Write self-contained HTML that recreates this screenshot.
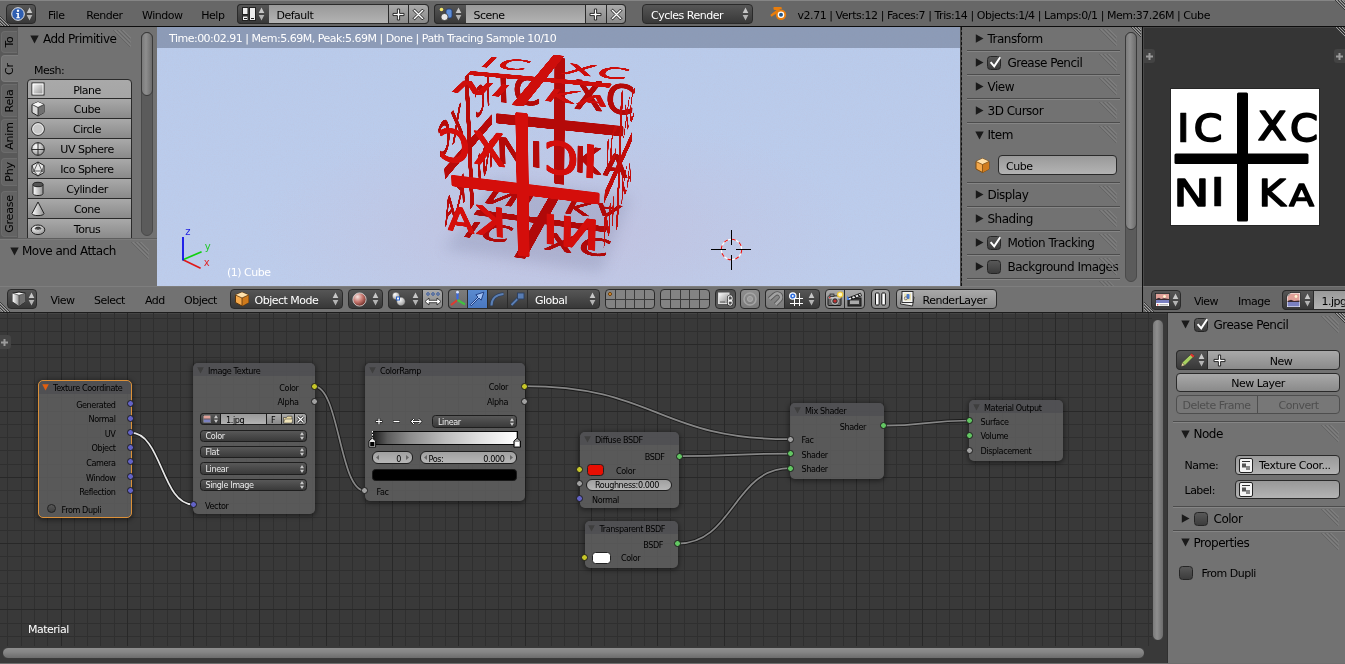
<!DOCTYPE html><html><head><meta charset="utf-8"><title>Blender</title><style>
*{box-sizing:border-box;margin:0;padding:0}
html,body{width:1345px;height:664px;overflow:hidden;background:#727272}
body{position:relative;font-family:"DejaVu Sans","Liberation Sans",sans-serif;font-size:10px;color:#000;line-height:1}
#root{position:absolute;left:0;top:0;width:1345px;height:664px;will-change:transform}
.a{position:absolute}
.t{position:absolute;white-space:nowrap;font-size:11px;letter-spacing:-.5px;line-height:13px}
.pt{position:absolute;white-space:nowrap;font-size:12px;letter-spacing:-.5px;line-height:14px}
.w{position:absolute;border:1px solid #2a2a2a;border-radius:4px}
.tool{background:linear-gradient(#a9a9a9,#8a8a8a)}
.menu{background:linear-gradient(#565656,#383838);color:#fff}
.txt{background:linear-gradient(#999,#b3b3b3)}
.num{background:linear-gradient(#a0a0a0,#b4b4b4)}
.hd{background:#727272}
.nt{position:absolute;white-space:nowrap;font-size:8.1px;letter-spacing:-.4px;line-height:10px;color:#000}
.node{position:absolute;border-radius:5px;background:rgba(94,94,94,.86);box-shadow:0 1px 5px 1px rgba(0,0,0,.45)}
.nh{position:absolute;left:0;top:0;right:0;height:13px;border-radius:5px 5px 0 0;background:rgba(70,70,78,.45)}
.sk{position:absolute;width:7px;height:7px;border-radius:50%;border:1px solid #1c1c1c}
.nm{position:absolute;border:1px solid #1e1e1e;border-radius:3.5px;background:linear-gradient(#585858,#3a3a3a);color:#ececec;font-size:8.1px;letter-spacing:-.4px;line-height:10px;white-space:nowrap}
</style></head><body><div id="root">
<div class="a" style="left:0px;top:0px;width:1345px;height:26px;background:#676767"></div>
<div class="a" style="left:0px;top:0px;width:1345px;height:1px;background:#858585"></div>
<div class="a" style="left:0px;top:26px;width:1345px;height:1px;background:#0c0c0c"></div>
<svg class="a" style="left:0px;top:14px;transform:" width="12" height="12" viewBox="0 0 12 12"><path d="M0 2L10 12M0 5L7 12M0 8L4 12" stroke="#3a3a3a" stroke-width="1" fill="none"/><path d="M0 3L9 12M0 6L6 12M0 9L3 12" stroke="#a0a0a0" stroke-width="1" fill="none"/></svg>
<svg class="a" style="left:1333px;top:0px;transform:scale(-1,-1)" width="12" height="12" viewBox="0 0 12 12"><path d="M0 2L10 12M0 5L7 12M0 8L4 12" stroke="#3a3a3a" stroke-width="1" fill="none"/><path d="M0 3L9 12M0 6L6 12M0 9L3 12" stroke="#a0a0a0" stroke-width="1" fill="none"/></svg>
<div class="w menu" style="left:6px;top:4px;width:30px;height:20px;"></div>
<svg class="a" style="left:11px;top:7px" width="14" height="14" viewBox="0 0 14 14"><circle cx="7" cy="7" r="6.3" fill="#2f5fb2" stroke="#e8e8e8" stroke-width="1"/><circle cx="7" cy="3.8" r="1.2" fill="#fff"/><path d="M5.3 6h2.6v4.2h1v1H5.3v-1h1V7h-1z" fill="#fff"/></svg>
<svg class="a" style="left:26px;top:7px" width="7" height="14" viewBox="0 0 7 14"><path d="M3.5 0.6L6.3 5.9H0.7z" fill="#c8c8c8"/><path d="M3.5 13.4L6.3 8.1H0.7z" fill="#c8c8c8" opacity=".85"/></svg>
<div class="t" style="left:48px;top:9px;">File</div>
<div class="t" style="left:86.3px;top:9px;">Render</div>
<div class="t" style="left:142px;top:9px;">Window</div>
<div class="t" style="left:201.3px;top:9px;">Help</div>
<div class="w txt" style="left:237px;top:4px;width:191.5px;height:20px;"></div>
<div class="w menu" style="left:237px;top:4px;width:32px;height:20px;border-radius:4px 0 0 4px;border-right:none"></div>
<div class="a" style="left:388px;top:4px;width:20px;height:20px;border:none;border-left:1px solid #2a2a2a;border-top:1px solid #2a2a2a;border-bottom:1px solid #2a2a2a;border-radius:0;background:linear-gradient(#a9a9a9,#8a8a8a)"></div>
<div class="w" style="left:408px;top:4px;width:20.5px;height:20px;border-radius:0 4px 4px 0;background:linear-gradient(#a9a9a9,#8a8a8a)"></div>
<div class="a" style="left:408px;top:5px;width:1px;height:18px;background:#2a2a2a"></div>
<svg class="a" style="left:242px;top:7px" width="14" height="14" viewBox="0 0 14 14"><rect x="0.5" y="0.5" width="5.5" height="7" fill="#eee" stroke="#222"/><rect x="0.5" y="9" width="5.5" height="4.5" fill="#eee" stroke="#222"/><rect x="7.5" y="0.5" width="6" height="13" fill="#eee" stroke="#222"/><path d="M2 11.5h3M9 11.5h3" stroke="#222"/></svg>
<svg class="a" style="left:258px;top:7px" width="7" height="14" viewBox="0 0 7 14"><path d="M3.5 0.6L6.3 5.9H0.7z" fill="#c8c8c8"/><path d="M3.5 13.4L6.3 8.1H0.7z" fill="#c8c8c8" opacity=".85"/></svg>
<div class="t" style="left:276.5px;top:9px;">Default</div>
<svg class="a" style="left:391.5px;top:7.5px" width="13" height="13" viewBox="0 0 13 13"><path d="M5.4 1h2.2v4.4H12v2.2H7.6V12H5.4V7.6H1V5.4h4.4z" fill="#fff" stroke="#1a1a1a" stroke-width=".9"/></svg>
<svg class="a" style="left:411.75px;top:7.5px" width="13" height="13" viewBox="0 0 13 13"><path d="M5.4 0h2.2v5.4H13v2.2H7.6V13H5.4V7.6H0V5.4h5.4z" transform="rotate(45 6.5 6.5)" fill="#fff" stroke="#1a1a1a" stroke-width=".9"/></svg>
<div class="w txt" style="left:434px;top:4px;width:192px;height:20px;"></div>
<div class="w menu" style="left:434px;top:4px;width:32px;height:20px;border-radius:4px 0 0 4px;border-right:none"></div>
<div class="a" style="left:585px;top:4px;width:21px;height:20px;border:none;border-left:1px solid #2a2a2a;border-top:1px solid #2a2a2a;border-bottom:1px solid #2a2a2a;border-radius:0;background:linear-gradient(#a9a9a9,#8a8a8a)"></div>
<div class="w" style="left:606px;top:4px;width:20px;height:20px;border-radius:0 4px 4px 0;background:linear-gradient(#a9a9a9,#8a8a8a)"></div>
<div class="a" style="left:606px;top:5px;width:1px;height:18px;background:#2a2a2a"></div>
<svg class="a" style="left:438px;top:6px" width="16" height="16" viewBox="0 0 16 16"><circle cx="3.5" cy="3.5" r="1.8" fill="#f4e86a"/><rect x="8" y="3" width="6" height="9" rx="2" fill="#5f8fd8" stroke="#1d3a78" stroke-width=".8"/><circle cx="6.5" cy="11" r="3.6" fill="#e8e8e8" stroke="#333" stroke-width=".8"/></svg>
<svg class="a" style="left:455px;top:7px" width="7" height="14" viewBox="0 0 7 14"><path d="M3.5 0.6L6.3 5.9H0.7z" fill="#c8c8c8"/><path d="M3.5 13.4L6.3 8.1H0.7z" fill="#c8c8c8" opacity=".85"/></svg>
<div class="t" style="left:473.5px;top:9px;">Scene</div>
<svg class="a" style="left:589.0px;top:7.5px" width="13" height="13" viewBox="0 0 13 13"><path d="M5.4 1h2.2v4.4H12v2.2H7.6V12H5.4V7.6H1V5.4h4.4z" fill="#fff" stroke="#1a1a1a" stroke-width=".9"/></svg>
<svg class="a" style="left:609.5px;top:7.5px" width="13" height="13" viewBox="0 0 13 13"><path d="M5.4 0h2.2v5.4H13v2.2H7.6V13H5.4V7.6H0V5.4h5.4z" transform="rotate(45 6.5 6.5)" fill="#fff" stroke="#1a1a1a" stroke-width=".9"/></svg>
<div class="w menu" style="left:642px;top:4px;width:111px;height:20px;"></div>
<div class="t" style="left:651px;top:9px;color:#fff">Cycles Render</div>
<svg class="a" style="left:742px;top:7px" width="7" height="14" viewBox="0 0 7 14"><path d="M3.5 0.6L6.3 5.9H0.7z" fill="#c8c8c8"/><path d="M3.5 13.4L6.3 8.1H0.7z" fill="#c8c8c8" opacity=".85"/></svg>
<svg class="a" style="left:770px;top:6px" width="18" height="15" viewBox="0 0 18 15"><path d="M1 9.5L9 3.2H4.5L4.3 2h6.3l1 0.8" fill="none" stroke="#e87d0d" stroke-width="1.8" stroke-linejoin="round"/><path d="M1 10L7 5.6" stroke="#e87d0d" stroke-width="2"/><circle cx="11" cy="8.7" r="5.2" fill="#e87d0d"/><circle cx="11" cy="8.7" r="3.3" fill="#fff"/><circle cx="11" cy="8.7" r="2" fill="#265787"/></svg>
<div class="t" style="left:797.5px;top:9px;letter-spacing:-.455px">v2.71 | Verts:12 | Faces:7 | Tris:14 | Objects:1/4 | Lamps:0/1 | Mem:37.26M | Cube</div>
<div class="a" style="left:0px;top:27px;width:157px;height:259px;background:#727272"></div>
<div class="a" style="left:0px;top:27px;width:17.5px;height:211px;background:#595959"></div>
<div class="a" style="left:1px;top:31px;width:16px;height:22px;background:#636363;border:1px solid #6c6c6c;border-right:none;border-radius:4px 0 0 4px"></div>
<div class="a" style="left:1px;top:31px;width:16px;height:22px"><div class="t" style="left:7.5px;top:11.0px;letter-spacing:-.2px;transform:translate(-50%,-50%) rotate(-90deg)">To</div></div>
<div class="a" style="left:1px;top:55px;width:17px;height:27px;background:#727272;border:1px solid #7c7c7c;border-right:none;border-radius:4px 0 0 4px"></div>
<div class="a" style="left:1px;top:55px;width:16px;height:27px"><div class="t" style="left:7.5px;top:13.5px;letter-spacing:-.2px;transform:translate(-50%,-50%) rotate(-90deg)">Cr</div></div>
<div class="a" style="left:1px;top:84px;width:16px;height:33px;background:#636363;border:1px solid #6c6c6c;border-right:none;border-radius:4px 0 0 4px"></div>
<div class="a" style="left:1px;top:84px;width:16px;height:33px"><div class="t" style="left:7.5px;top:16.5px;letter-spacing:-.2px;transform:translate(-50%,-50%) rotate(-90deg)">Rela</div></div>
<div class="a" style="left:1px;top:119px;width:16px;height:34px;background:#636363;border:1px solid #6c6c6c;border-right:none;border-radius:4px 0 0 4px"></div>
<div class="a" style="left:1px;top:119px;width:16px;height:34px"><div class="t" style="left:7.5px;top:17.0px;letter-spacing:-.2px;transform:translate(-50%,-50%) rotate(-90deg)">Anim</div></div>
<div class="a" style="left:1px;top:158px;width:16px;height:28px;background:#636363;border:1px solid #6c6c6c;border-right:none;border-radius:4px 0 0 4px"></div>
<div class="a" style="left:1px;top:158px;width:16px;height:28px"><div class="t" style="left:7.5px;top:14.0px;letter-spacing:-.2px;transform:translate(-50%,-50%) rotate(-90deg)">Phy</div></div>
<div class="a" style="left:1px;top:191px;width:16px;height:46px;background:#636363;border:1px solid #6c6c6c;border-right:none;border-radius:4px 0 0 4px"></div>
<div class="a" style="left:1px;top:191px;width:16px;height:46px"><div class="t" style="left:7.5px;top:23.0px;letter-spacing:-.2px;transform:translate(-50%,-50%) rotate(-90deg)">Grease</div></div>
<svg class="a" style="left:30px;top:35px" width="9" height="9" viewBox="0 0 9 9"><path d="M0.3 0.5H8.7L4.5 8.5z" fill="#1a1a1a"/></svg>
<div class="pt" style="left:43px;top:32px;">Add Primitive</div>
<svg class="a" style="left:113px;top:30px" width="18" height="18" viewBox="0 0 18 18"><path d="M0.5 0L17.5 17M4.5 0L17.5 13M8.5 0L17.5 9" stroke="#585858" stroke-width="1" fill="none"/><path d="M1.5 0L18.5 17M5.5 0L18.5 13M9.5 0L18.5 9" stroke="#8e8e8e" stroke-width=".9" fill="none"/></svg>
<div class="t" style="left:34px;top:64px;">Mesh:</div>
<div class="w tool" style="left:27px;top:79px;width:105px;height:164px;overflow:hidden;border-radius:4px 4px 3px 3px"></div>
<svg width="0" height="0" style="position:absolute"><defs><linearGradient id="gpl" x1="0" y1="0" x2="1" y2="1"><stop offset="0" stop-color="#fff"/><stop offset="1" stop-color="#888"/></linearGradient><radialGradient id="gsp" cx=".35" cy=".3" r=".8"><stop offset="0" stop-color="#fff"/><stop offset="1" stop-color="#8c8c8c"/></radialGradient><linearGradient id="gcy" x1="0" y1="0" x2="1" y2="0"><stop offset="0" stop-color="#fff"/><stop offset="1" stop-color="#909090"/></linearGradient></defs></svg>
<svg class="a" style="left:30px;top:81px" width="16" height="16" viewBox="0 0 16 16"><rect x="2" y="2" width="12" height="12" fill="url(#gpl)" stroke="#222" stroke-width="1"/><rect x="3" y="3" width="10" height="10" fill="none" stroke="#fff" stroke-width="1"/></svg>
<div class="t" style="left:46px;width:82px;text-align:center;top:84px">Plane</div>
<div class="a" style="left:28px;top:98px;width:103px;height:1px;background:#2a2a2a"></div>
<div class="a" style="left:28px;top:99px;width:103px;height:19px;background:linear-gradient(#a9a9a9,#8a8a8a)"></div>
<svg class="a" style="left:30px;top:101px" width="16" height="16" viewBox="0 0 16 16"><path d="M8 1L14 3.5V11.5L8 15L2 11.5V3.5z" fill="#d8d8d8" stroke="#222" stroke-width="1"/><path d="M8 6.5L14 3.5V11.5L8 15z" fill="#707070"/><path d="M2 3.5L8 1L14 3.5L8 6.5z" fill="#f6f6f6"/><path d="M2 3.5L8 6.5L14 3.5M8 6.5V15" stroke="#222" stroke-width=".8" fill="none"/></svg>
<div class="t" style="left:46px;width:82px;text-align:center;top:103px">Cube</div>
<div class="a" style="left:28px;top:118px;width:103px;height:1px;background:#2a2a2a"></div>
<div class="a" style="left:28px;top:119px;width:103px;height:19px;background:linear-gradient(#a9a9a9,#8a8a8a)"></div>
<svg class="a" style="left:30px;top:121px" width="16" height="16" viewBox="0 0 16 16"><circle cx="8" cy="8" r="6.3" fill="#c8c8c8" stroke="#222" stroke-width="1"/><circle cx="8" cy="8" r="5.3" fill="none" stroke="#f0f0f0" stroke-width=".9"/></svg>
<div class="t" style="left:46px;width:82px;text-align:center;top:123px">Circle</div>
<div class="a" style="left:28px;top:138px;width:103px;height:1px;background:#2a2a2a"></div>
<div class="a" style="left:28px;top:139px;width:103px;height:19px;background:linear-gradient(#a9a9a9,#8a8a8a)"></div>
<svg class="a" style="left:30px;top:141px" width="16" height="16" viewBox="0 0 16 16"><circle cx="8" cy="8" r="6.3" fill="url(#gsp)" stroke="#222" stroke-width="1"/><path d="M1.7 8.5H14.3M8 1.7V14.3" stroke="#222" stroke-width=".9" fill="none"/></svg>
<div class="t" style="left:46px;width:82px;text-align:center;top:143px">UV Sphere</div>
<div class="a" style="left:28px;top:158px;width:103px;height:1px;background:#2a2a2a"></div>
<div class="a" style="left:28px;top:159px;width:103px;height:19px;background:linear-gradient(#a9a9a9,#8a8a8a)"></div>
<svg class="a" style="left:30px;top:161px" width="16" height="16" viewBox="0 0 16 16"><path d="M8 1L14 4.5V11.5L8 15L2 11.5V4.5z" fill="#e8e8e8" stroke="#222" stroke-width="1"/><path d="M8 1L4 10H12zM2 4.5L4 10L8 15L12 10L14 4.5M2 11.5L4 10M12 10L14 11.5" stroke="#222" stroke-width=".7" fill="none"/><path d="M12 10L14 4.5V11.5z" fill="#777"/></svg>
<div class="t" style="left:46px;width:82px;text-align:center;top:163px">Ico Sphere</div>
<div class="a" style="left:28px;top:178px;width:103px;height:1px;background:#2a2a2a"></div>
<div class="a" style="left:28px;top:179px;width:103px;height:19px;background:linear-gradient(#a9a9a9,#8a8a8a)"></div>
<svg class="a" style="left:30px;top:181px" width="16" height="16" viewBox="0 0 16 16"><path d="M3 3.5V12.5C3 15.2 13 15.2 13 12.5V3.5" fill="url(#gcy)" stroke="#222" stroke-width="1"/><ellipse cx="8" cy="3.5" rx="5" ry="2.2" fill="#555" stroke="#222" stroke-width="1"/></svg>
<div class="t" style="left:46px;width:82px;text-align:center;top:183px">Cylinder</div>
<div class="a" style="left:28px;top:198px;width:103px;height:1px;background:#2a2a2a"></div>
<div class="a" style="left:28px;top:199px;width:103px;height:19px;background:linear-gradient(#a9a9a9,#8a8a8a)"></div>
<svg class="a" style="left:30px;top:201px" width="16" height="16" viewBox="0 0 16 16"><path d="M8 1L14 12.5C14 15.3 2 15.3 2 12.5z" fill="url(#gcy)" stroke="#222" stroke-width="1"/></svg>
<div class="t" style="left:46px;width:82px;text-align:center;top:203px">Cone</div>
<div class="a" style="left:28px;top:218px;width:103px;height:1px;background:#2a2a2a"></div>
<div class="a" style="left:28px;top:219px;width:103px;height:19px;background:linear-gradient(#a9a9a9,#8a8a8a)"></div>
<svg class="a" style="left:30px;top:221px" width="16" height="16" viewBox="0 0 16 16"><ellipse cx="8" cy="8.8" rx="6.8" ry="4.8" fill="url(#gsp)" stroke="#222" stroke-width="1"/><ellipse cx="8" cy="7.6" rx="2.8" ry="1.5" fill="#4a4a4a" stroke="#222" stroke-width=".9"/><path d="M5.6 8.6Q8 10.2 10.4 8.6" stroke="#fff" stroke-width=".8" fill="none"/></svg>
<div class="t" style="left:46px;width:82px;text-align:center;top:223px">Torus</div>
<div class="a" style="left:141px;top:32px;width:12px;height:204px;background:#5b5b5b;border-radius:6px;border:1px solid #4a4a4a"></div>
<div class="a" style="left:141px;top:32px;width:12px;height:64px;background:linear-gradient(90deg,#7a7a7a,#8e8e8e 40%,#6c6c6c);border-radius:6px;border:1px solid #3a3a3a"></div>
<div class="a" style="left:0px;top:238px;width:157px;height:48px;background:#727272"></div>
<div class="a" style="left:0px;top:238px;width:157px;height:1px;background:#5e5e5e"></div>
<div class="a" style="left:0px;top:239px;width:157px;height:1px;background:#7b7b7b"></div>
<svg class="a" style="left:10px;top:247px" width="9" height="9" viewBox="0 0 9 9"><path d="M0.3 0.5H8.7L4.5 8.5z" fill="#1a1a1a"/></svg>
<div class="pt" style="left:22px;top:244px;">Move and Attach</div>
<svg class="a" style="left:131px;top:242px" width="18" height="18" viewBox="0 0 18 18"><path d="M0.5 0L17.5 17M4.5 0L17.5 13M8.5 0L17.5 9" stroke="#585858" stroke-width="1" fill="none"/><path d="M1.5 0L18.5 17M5.5 0L18.5 13M9.5 0L18.5 9" stroke="#8e8e8e" stroke-width=".9" fill="none"/></svg>
<div class="a" style="left:157px;top:27px;width:804px;height:259px;background:linear-gradient(#b9cbeb,#bbccec 60%,#bdcdec);overflow:hidden"><div style="position:absolute;left:0;top:0;width:804px;height:259px;background:radial-gradient(ellipse 300px 120px at 400px 205px,rgba(214,150,172,.20),rgba(214,160,180,.08) 60%,transparent)"></div>
<svg style="position:absolute;left:0;top:0" width="804" height="259"><filter id="nz" x="0" y="0" width="100%" height="100%"><feTurbulence type="fractalNoise" baseFrequency="0.85" numOctaves="2" seed="3"/><feColorMatrix type="matrix" values="0 0 0 0 0.55  0 0 0 0 0.5  0 0 0 0 0.62  1.6 0 0 0 -0.62"/></filter><rect width="804" height="259" filter="url(#nz)" opacity=".22"/></svg>
<svg style="position:absolute;left:0;top:0;filter:blur(7px)" width="804" height="259"><polygon points="287.4,222.5 444.4,245.2 473.9,170.0 337.8,153.5" fill="rgba(70,80,120,.16)"/></svg>
<div style="position:absolute;left:0;top:0;width:444px;height:411px;transform-origin:0 0;transform:matrix3d(0.283926,0.0238877,0,-9.41232e-05,0.0686393,0.348128,0,0.000174599,0,0,1,0,333.816,21.4578,0,1)"><svg width="444" height="411" viewBox="0 0 148 137" style="position:absolute;left:0;top:0;overflow:visible"><g fill="#b40a09" stroke="#b40a09" stroke-linejoin="round"><rect x="66" y="3.5" width="11" height="129" rx="1.5" stroke="none"/><rect x="3.5" y="64.5" width="134" height="10.5" rx="1.5" stroke="none"/><g font-family="'DejaVu Sans','Liberation Sans',sans-serif" font-size="100"><text transform="translate(4.50,52.50) scale(0.5300,0.3890)" stroke-width="1.31">I</text><text transform="translate(22.62,52.13) scale(0.4138,0.3737)" stroke-width="4.06">C</text><text transform="translate(86.52,51.40) scale(0.4258,0.3849)" stroke-width="3.95">X</text><text transform="translate(118.77,52.12) scale(0.4052,0.3842)" stroke-width="4.05">C</text><text transform="translate(2.36,117.00) scale(0.4836,0.3781)" stroke-width="3.71">N</text><text transform="translate(37.70,117.20) scale(0.6100,0.3822)" stroke-width="1.21">I</text><text transform="translate(87.58,116.70) scale(0.4123,0.3685)" stroke-width="4.10">K</text><text transform="translate(118.24,116.70) scale(0.3636,0.3068)" stroke-width="4.77">A</text></g></g></svg></div>
<div style="position:absolute;left:0;top:0;width:444px;height:411px;transform-origin:0 0;transform:matrix3d(0.308232,0.0259327,0,-0.000102181,0.256915,-0.106853,0,0.000397835,0,0,1,0,287.426,222.541,0,1)"><svg width="444" height="411" viewBox="0 0 148 137" style="position:absolute;left:0;top:0;overflow:visible"><g fill="#b00909" stroke="#b00909" stroke-linejoin="round"><rect x="66" y="3.5" width="11" height="129" rx="1.5" stroke="none"/><rect x="3.5" y="64.5" width="134" height="10.5" rx="1.5" stroke="none"/><g font-family="'DejaVu Sans','Liberation Sans',sans-serif" font-size="100"><text transform="translate(4.50,52.50) scale(0.5300,0.3890)" stroke-width="1.31">I</text><text transform="translate(22.62,52.13) scale(0.4138,0.3737)" stroke-width="4.06">C</text><text transform="translate(86.52,51.40) scale(0.4258,0.3849)" stroke-width="3.95">X</text><text transform="translate(118.77,52.12) scale(0.4052,0.3842)" stroke-width="4.05">C</text><text transform="translate(2.36,117.00) scale(0.4836,0.3781)" stroke-width="3.71">N</text><text transform="translate(37.70,117.20) scale(0.6100,0.3822)" stroke-width="1.21">I</text><text transform="translate(87.58,116.70) scale(0.4123,0.3685)" stroke-width="4.10">K</text><text transform="translate(118.24,116.70) scale(0.3636,0.3068)" stroke-width="4.77">A</text></g></g></svg></div>
<div style="position:absolute;left:0;top:0;width:444px;height:411px;transform-origin:0 0;transform:matrix3d(-0.219066,0.091112,0,-0.000339225,0.068639,0.348128,0,0.000174598,0,0,1,0,333.816,21.4578,0,1)"><svg width="444" height="411" viewBox="0 0 148 137" style="position:absolute;left:0;top:0;overflow:visible"><g fill="#b80a09" stroke="#b80a09" stroke-linejoin="round"><rect x="66" y="3.5" width="11" height="129" rx="1.5" stroke="none"/><rect x="3.5" y="64.5" width="134" height="10.5" rx="1.5" stroke="none"/><g font-family="'DejaVu Sans','Liberation Sans',sans-serif" font-size="100"><text transform="translate(4.50,52.50) scale(0.5300,0.3890)" stroke-width="1.31">I</text><text transform="translate(22.62,52.13) scale(0.4138,0.3737)" stroke-width="4.06">C</text><text transform="translate(86.52,51.40) scale(0.4258,0.3849)" stroke-width="3.95">X</text><text transform="translate(118.77,52.12) scale(0.4052,0.3842)" stroke-width="4.05">C</text><text transform="translate(2.36,117.00) scale(0.4836,0.3781)" stroke-width="3.71">N</text><text transform="translate(37.70,117.20) scale(0.6100,0.3822)" stroke-width="1.21">I</text><text transform="translate(87.58,116.70) scale(0.4123,0.3685)" stroke-width="4.10">K</text><text transform="translate(118.24,116.70) scale(0.3636,0.3068)" stroke-width="4.77">A</text></g></g></svg></div>
<div style="position:absolute;left:0;top:0;width:444px;height:411px;transform-origin:0 0;transform:matrix3d(0.271258,-0.112819,0,0.000420045,0.0849923,0.431069,0,0.000216197,0,0,1,0,449.005,89.7948,0,1)"><svg width="444" height="411" viewBox="0 0 148 137" style="position:absolute;left:0;top:0;overflow:visible"><g fill="#c20c0a" stroke="#c20c0a" stroke-linejoin="round"><rect x="66" y="3.5" width="11" height="129" rx="1.5" stroke="none"/><rect x="3.5" y="64.5" width="134" height="10.5" rx="1.5" stroke="none"/><g font-family="'DejaVu Sans','Liberation Sans',sans-serif" font-size="100"><text transform="translate(4.50,52.50) scale(0.5300,0.3890)" stroke-width="1.31">I</text><text transform="translate(22.62,52.13) scale(0.4138,0.3737)" stroke-width="4.06">C</text><text transform="translate(86.52,51.40) scale(0.4258,0.3849)" stroke-width="3.95">X</text><text transform="translate(118.77,52.12) scale(0.4052,0.3842)" stroke-width="4.05">C</text><text transform="translate(2.36,117.00) scale(0.4836,0.3781)" stroke-width="3.71">N</text><text transform="translate(37.70,117.20) scale(0.6100,0.3822)" stroke-width="1.21">I</text><text transform="translate(87.58,116.70) scale(0.4123,0.3685)" stroke-width="4.10">K</text><text transform="translate(118.24,116.70) scale(0.3636,0.3068)" stroke-width="4.77">A</text></g></g></svg></div>
<div style="position:absolute;left:0;top:0;width:444px;height:411px;transform-origin:0 0;transform:matrix3d(0.283926,0.0238877,0,-9.41231e-05,-0.236656,0.0984275,0,-0.000366463,0,0,1,0,333.816,21.4578,0,1)"><svg width="444" height="411" viewBox="0 0 148 137" style="position:absolute;left:0;top:0;overflow:visible"><g fill="#ce0e0b" stroke="#ce0e0b" stroke-linejoin="round"><rect x="66" y="3.5" width="11" height="129" rx="1.5" stroke="none"/><rect x="3.5" y="64.5" width="134" height="10.5" rx="1.5" stroke="none"/><g font-family="'DejaVu Sans','Liberation Sans',sans-serif" font-size="100"><text transform="translate(4.50,52.50) scale(0.5300,0.3890)" stroke-width="1.31">I</text><text transform="translate(22.62,52.13) scale(0.4138,0.3737)" stroke-width="4.06">C</text><text transform="translate(86.52,51.40) scale(0.4258,0.3849)" stroke-width="3.95">X</text><text transform="translate(118.77,52.12) scale(0.4052,0.3842)" stroke-width="4.05">C</text><text transform="translate(2.36,117.00) scale(0.4836,0.3781)" stroke-width="3.71">N</text><text transform="translate(37.70,117.20) scale(0.6100,0.3822)" stroke-width="1.21">I</text><text transform="translate(87.58,116.70) scale(0.4123,0.3685)" stroke-width="4.10">K</text><text transform="translate(118.24,116.70) scale(0.3636,0.3068)" stroke-width="4.77">A</text></g></g></svg></div>
<div style="position:absolute;left:0;top:0;width:444px;height:411px;transform-origin:0 0;transform:matrix3d(-0.35157,-0.0295789,0,0.000116548,0.0849922,0.431069,0,0.000216197,0,0,1,0,449.005,89.7948,0,1)"><svg width="444" height="411" viewBox="0 0 148 137" style="position:absolute;left:0;top:0;overflow:visible"><g fill="#d40e0b" stroke="#d40e0b" stroke-linejoin="round"><rect x="66" y="3.5" width="11" height="129" rx="1.5" stroke="none"/><rect x="3.5" y="64.5" width="134" height="10.5" rx="1.5" stroke="none"/><g font-family="'DejaVu Sans','Liberation Sans',sans-serif" font-size="100"><text transform="translate(4.50,52.50) scale(0.5300,0.3890)" stroke-width="1.31">I</text><text transform="translate(22.62,52.13) scale(0.4138,0.3737)" stroke-width="4.06">C</text><text transform="translate(86.52,51.40) scale(0.4258,0.3849)" stroke-width="3.95">X</text><text transform="translate(118.77,52.12) scale(0.4052,0.3842)" stroke-width="4.05">C</text><text transform="translate(2.36,117.00) scale(0.4836,0.3781)" stroke-width="3.71">N</text><text transform="translate(37.70,117.20) scale(0.6100,0.3822)" stroke-width="1.21">I</text><text transform="translate(87.58,116.70) scale(0.4123,0.3685)" stroke-width="4.10">K</text><text transform="translate(118.24,116.70) scale(0.3636,0.3068)" stroke-width="4.77">A</text></g></g></svg></div></div>
<div class="a" style="left:157px;top:27px;width:804px;height:21px;background:rgba(96,108,132,.5)"></div>
<div class="t" style="left:169px;top:32px;color:#fff">Time:00:02.91 | Mem:5.69M, Peak:5.69M | Done | Path Tracing Sample 10/10</div>
<div class="t" style="left:227px;top:266px;color:#fff">(1) Cube</div>
<svg class="a" style="left:176px;top:224px" width="40" height="50" viewBox="0 0 40 50"><path d="M7 35.8L24.6 44.2" stroke="#e01818" stroke-width="1.7"/><path d="M7 35.8L25.6 27.7" stroke="#10d010" stroke-width="1.7"/><path d="M7 36.5L7 13.1" stroke="#1010e8" stroke-width="1.8"/><g font-family="'DejaVu Sans',sans-serif" font-size="10"><text x="9.3" y="10.5" fill="#2020e0">z</text><text x="28.8" y="25.5" fill="#20c828">y</text><text x="27.7" y="41.6" fill="#e02828">x</text></g></svg>
<svg class="a" style="left:710px;top:228px" width="44" height="44" viewBox="0 0 44 44"><circle cx="21.5" cy="21.5" r="10.2" fill="none" stroke="#fff" stroke-width="1.1"/><circle cx="21.5" cy="21.5" r="10.2" fill="none" stroke="#e81010" stroke-width="1.1" stroke-dasharray="4 4"/><path d="M21.5 2V17M21.5 27V42M1 21.5H16M26 21.5H41" stroke="#000" stroke-width="1" shape-rendering="crispEdges"/></svg>
<div class="a" style="left:961px;top:27px;width:182px;height:259px;background:#727272"></div>
<div class="a" style="left:960px;top:27px;width:2px;height:259px;background:#4a4a4a"></div>
<div class="a" style="left:961px;top:27px;width:0;height:259px;border-left:1px dashed #111"></div>
<svg class="a" style="left:975px;top:33.5px" width="9" height="9" viewBox="0 0 9 9"><path d="M0.8 0.3V8.7L8.5 4.5z" fill="#1a1a1a"/></svg>
<div class="pt" style="left:987.5px;top:32px;">Transform</div>
<svg class="a" style="left:1099px;top:29px" width="18" height="18" viewBox="0 0 18 18"><path d="M0.5 0L17.5 17M4.5 0L17.5 13M8.5 0L17.5 9" stroke="#585858" stroke-width="1" fill="none"/><path d="M1.5 0L18.5 17M5.5 0L18.5 13M9.5 0L18.5 9" stroke="#8e8e8e" stroke-width=".9" fill="none"/></svg>
<svg class="a" style="left:975px;top:58.0px" width="9" height="9" viewBox="0 0 9 9"><path d="M0.8 0.3V8.7L8.5 4.5z" fill="#1a1a1a"/></svg>
<div class="a" style="left:987px;top:56.0px;width:14px;height:14px;border-radius:3.5px;border:1px solid #252525;background:linear-gradient(#585858,#3c3c3c)"></div>
<svg class="a" style="left:987px;top:53.0px" width="17" height="17" viewBox="0 0 17 17"><path d="M3.6 9.2L7.2 13.4L13.2 4.2" stroke="#fff" stroke-width="2" fill="none"/></svg>
<div class="pt" style="left:1007.5px;top:56px;">Grease Pencil</div>
<svg class="a" style="left:1099px;top:53.5px" width="18" height="18" viewBox="0 0 18 18"><path d="M0.5 0L17.5 17M4.5 0L17.5 13M8.5 0L17.5 9" stroke="#585858" stroke-width="1" fill="none"/><path d="M1.5 0L18.5 17M5.5 0L18.5 13M9.5 0L18.5 9" stroke="#8e8e8e" stroke-width=".9" fill="none"/></svg>
<svg class="a" style="left:975px;top:82.0px" width="9" height="9" viewBox="0 0 9 9"><path d="M0.8 0.3V8.7L8.5 4.5z" fill="#1a1a1a"/></svg>
<div class="pt" style="left:987.5px;top:80px;">View</div>
<svg class="a" style="left:1099px;top:77.5px" width="18" height="18" viewBox="0 0 18 18"><path d="M0.5 0L17.5 17M4.5 0L17.5 13M8.5 0L17.5 9" stroke="#585858" stroke-width="1" fill="none"/><path d="M1.5 0L18.5 17M5.5 0L18.5 13M9.5 0L18.5 9" stroke="#8e8e8e" stroke-width=".9" fill="none"/></svg>
<svg class="a" style="left:975px;top:106.0px" width="9" height="9" viewBox="0 0 9 9"><path d="M0.8 0.3V8.7L8.5 4.5z" fill="#1a1a1a"/></svg>
<div class="pt" style="left:987.5px;top:104px;">3D Cursor</div>
<svg class="a" style="left:1099px;top:101.5px" width="18" height="18" viewBox="0 0 18 18"><path d="M0.5 0L17.5 17M4.5 0L17.5 13M8.5 0L17.5 9" stroke="#585858" stroke-width="1" fill="none"/><path d="M1.5 0L18.5 17M5.5 0L18.5 13M9.5 0L18.5 9" stroke="#8e8e8e" stroke-width=".9" fill="none"/></svg>
<svg class="a" style="left:974.5px;top:130.5px" width="9" height="9" viewBox="0 0 9 9"><path d="M0.3 0.5H8.7L4.5 8.5z" fill="#1a1a1a"/></svg>
<div class="pt" style="left:987.5px;top:128px;">Item</div>
<svg class="a" style="left:1099px;top:125.5px" width="18" height="18" viewBox="0 0 18 18"><path d="M0.5 0L17.5 17M4.5 0L17.5 13M8.5 0L17.5 9" stroke="#585858" stroke-width="1" fill="none"/><path d="M1.5 0L18.5 17M5.5 0L18.5 13M9.5 0L18.5 9" stroke="#8e8e8e" stroke-width=".9" fill="none"/></svg>
<svg class="a" style="left:975px;top:190.0px" width="9" height="9" viewBox="0 0 9 9"><path d="M0.8 0.3V8.7L8.5 4.5z" fill="#1a1a1a"/></svg>
<div class="pt" style="left:987.5px;top:188px;">Display</div>
<svg class="a" style="left:1099px;top:185.5px" width="18" height="18" viewBox="0 0 18 18"><path d="M0.5 0L17.5 17M4.5 0L17.5 13M8.5 0L17.5 9" stroke="#585858" stroke-width="1" fill="none"/><path d="M1.5 0L18.5 17M5.5 0L18.5 13M9.5 0L18.5 9" stroke="#8e8e8e" stroke-width=".9" fill="none"/></svg>
<svg class="a" style="left:975px;top:214.0px" width="9" height="9" viewBox="0 0 9 9"><path d="M0.8 0.3V8.7L8.5 4.5z" fill="#1a1a1a"/></svg>
<div class="pt" style="left:987.5px;top:212px;">Shading</div>
<svg class="a" style="left:1099px;top:209.5px" width="18" height="18" viewBox="0 0 18 18"><path d="M0.5 0L17.5 17M4.5 0L17.5 13M8.5 0L17.5 9" stroke="#585858" stroke-width="1" fill="none"/><path d="M1.5 0L18.5 17M5.5 0L18.5 13M9.5 0L18.5 9" stroke="#8e8e8e" stroke-width=".9" fill="none"/></svg>
<svg class="a" style="left:975px;top:238.0px" width="9" height="9" viewBox="0 0 9 9"><path d="M0.8 0.3V8.7L8.5 4.5z" fill="#1a1a1a"/></svg>
<div class="a" style="left:987px;top:236.0px;width:14px;height:14px;border-radius:3.5px;border:1px solid #252525;background:linear-gradient(#585858,#3c3c3c)"></div>
<svg class="a" style="left:987px;top:233.0px" width="17" height="17" viewBox="0 0 17 17"><path d="M3.6 9.2L7.2 13.4L13.2 4.2" stroke="#fff" stroke-width="2" fill="none"/></svg>
<div class="pt" style="left:1007.5px;top:236px;">Motion Tracking</div>
<svg class="a" style="left:1099px;top:233.5px" width="18" height="18" viewBox="0 0 18 18"><path d="M0.5 0L17.5 17M4.5 0L17.5 13M8.5 0L17.5 9" stroke="#585858" stroke-width="1" fill="none"/><path d="M1.5 0L18.5 17M5.5 0L18.5 13M9.5 0L18.5 9" stroke="#8e8e8e" stroke-width=".9" fill="none"/></svg>
<svg class="a" style="left:975px;top:262.0px" width="9" height="9" viewBox="0 0 9 9"><path d="M0.8 0.3V8.7L8.5 4.5z" fill="#1a1a1a"/></svg>
<div class="a" style="left:987px;top:260.0px;width:14px;height:14px;border-radius:3.5px;border:1px solid #252525;background:linear-gradient(#585858,#3c3c3c)"></div>
<div class="pt" style="left:1007.5px;top:260px;">Background Images</div>
<svg class="a" style="left:1099px;top:257.5px" width="18" height="18" viewBox="0 0 18 18"><path d="M0.5 0L17.5 17M4.5 0L17.5 13M8.5 0L17.5 9" stroke="#585858" stroke-width="1" fill="none"/><path d="M1.5 0L18.5 17M5.5 0L18.5 13M9.5 0L18.5 9" stroke="#8e8e8e" stroke-width=".9" fill="none"/></svg>
<div class="a" style="left:967px;top:50px;width:153px;height:1px;background:#4c4c4c"></div>
<div class="a" style="left:967px;top:51px;width:153px;height:1px;background:#858585"></div>
<div class="a" style="left:967px;top:74px;width:153px;height:1px;background:#4c4c4c"></div>
<div class="a" style="left:967px;top:75px;width:153px;height:1px;background:#858585"></div>
<div class="a" style="left:967px;top:98px;width:153px;height:1px;background:#4c4c4c"></div>
<div class="a" style="left:967px;top:99px;width:153px;height:1px;background:#858585"></div>
<div class="a" style="left:967px;top:122px;width:153px;height:1px;background:#4c4c4c"></div>
<div class="a" style="left:967px;top:123px;width:153px;height:1px;background:#858585"></div>
<div class="a" style="left:967px;top:182px;width:153px;height:1px;background:#4c4c4c"></div>
<div class="a" style="left:967px;top:183px;width:153px;height:1px;background:#858585"></div>
<div class="a" style="left:967px;top:206px;width:153px;height:1px;background:#4c4c4c"></div>
<div class="a" style="left:967px;top:207px;width:153px;height:1px;background:#858585"></div>
<div class="a" style="left:967px;top:230px;width:153px;height:1px;background:#4c4c4c"></div>
<div class="a" style="left:967px;top:231px;width:153px;height:1px;background:#858585"></div>
<div class="a" style="left:967px;top:254px;width:153px;height:1px;background:#4c4c4c"></div>
<div class="a" style="left:967px;top:255px;width:153px;height:1px;background:#858585"></div>
<div class="a" style="left:967px;top:278px;width:153px;height:1px;background:#4c4c4c"></div>
<div class="a" style="left:967px;top:279px;width:153px;height:1px;background:#858585"></div>
<div class="a" style="left:1099px;top:281px;width:20px;height:5px;overflow:hidden"><svg width="18" height="18" viewBox="0 0 18 18"><path d="M0.5 0L17.5 17M4.5 0L17.5 13M8.5 0L17.5 9" stroke="#5a5a5a" stroke-width="1" fill="none"/><path d="M1.5 0L18.5 17M5.5 0L18.5 13M9.5 0L18.5 9" stroke="#8a8a8a" stroke-width=".8" fill="none"/></svg></div>
<svg class="a" style="left:974px;top:157px" width="17" height="17" viewBox="0 0 17 17"><path d="M8.5 1.5L15 4.5V12L8.5 15.5L2 12V4.5z" fill="#f4a84a" stroke="#7a4a12" stroke-width="1"/><path d="M8.5 7.5L15 4.5V12L8.5 15.5z" fill="#d07c1e"/><path d="M2 4.5L8.5 7.5L15 4.5L8.5 1.5z" fill="#ffe0a8"/><path d="M2 4.5L8.5 7.5L15 4.5M8.5 7.5V15.5" stroke="#7a4a12" stroke-width=".8" fill="none"/></svg>
<div class="w txt" style="left:998px;top:155px;width:119px;height:20px;"></div>
<div class="t" style="left:1006px;top:160px;">Cube</div>
<div class="a" style="left:1125px;top:32px;width:12px;height:250px;background:#5b5b5b;border-radius:6px;border:1px solid #4a4a4a"></div>
<div class="a" style="left:1125px;top:32px;width:12px;height:198px;background:linear-gradient(90deg,#7a7a7a,#8e8e8e 40%,#6c6c6c);border-radius:6px;border:1px solid #3a3a3a"></div>
<svg class="a" style="left:1129px;top:27px;transform:scale(-1,-1)" width="12" height="12" viewBox="0 0 12 12"><path d="M0 2L10 12M0 5L7 12M0 8L4 12" stroke="#3a3a3a" stroke-width="1" fill="none"/><path d="M0 3L9 12M0 6L6 12M0 9L3 12" stroke="#a0a0a0" stroke-width="1" fill="none"/></svg>
<div class="a" style="left:1142px;top:27px;width:1px;height:286px;background:#0c0c0c"></div>
<div class="a" style="left:1143px;top:27px;width:1px;height:259px;background:#4a4a4a"></div>
<div class="a" style="left:1144px;top:27px;width:201px;height:259px;background:#353535"></div>
<div class="a" style="left:1144px;top:27px;width:201px;height:1px;background:#454545"></div>
<svg class="a" style="left:1333px;top:27px;transform:scale(-1,-1)" width="12" height="12" viewBox="0 0 12 12"><path d="M0 2L10 12M0 5L7 12M0 8L4 12" stroke="#3a3a3a" stroke-width="1" fill="none"/><path d="M0 3L9 12M0 6L6 12M0 9L3 12" stroke="#a0a0a0" stroke-width="1" fill="none"/></svg>
<div class="a" style="left:1170px;top:88px;width:150px;height:138px;background:#262626"></div>
<div class="a" style="left:1171px;top:89px;width:148px;height:136px;background:#fff"></div>
<svg class="a" style="left:1171px;top:88.5px" width="148" height="137" viewBox="0 0 148 137"><g fill="#000" stroke="#000" stroke-linejoin="round"><rect x="66" y="3.5" width="11" height="129" rx="1.5" stroke="none"/><rect x="3.5" y="64.5" width="134" height="10.5" rx="1.5" stroke="none"/><g font-family="'DejaVu Sans','Liberation Sans',sans-serif" font-size="100"><text transform="translate(4.50,52.50) scale(0.5300,0.3890)" stroke-width="1.31">I</text><text transform="translate(22.74,52.03) scale(0.4103,0.3711)" stroke-width="4.61">C</text><text transform="translate(86.63,51.30) scale(0.4226,0.3822)" stroke-width="4.47">X</text><text transform="translate(118.89,52.02) scale(0.4017,0.3816)" stroke-width="4.60">C</text><text transform="translate(2.50,116.90) scale(0.4800,0.3753)" stroke-width="4.21">N</text><text transform="translate(37.70,117.20) scale(0.6100,0.3822)" stroke-width="1.21">I</text><text transform="translate(87.71,116.60) scale(0.4088,0.3658)" stroke-width="4.65">K</text><text transform="translate(118.34,116.60) scale(0.3606,0.3041)" stroke-width="5.42">A</text></g></g></svg>
<div class="a" style="left:1144px;top:49px;width:11px;height:14px;background:#434343;border-radius:0 3px 3px 0"></div>
<svg class="a" style="left:1145px;top:51.5px" width="9" height="9" viewBox="0 0 9 9"><path d="M4.5 1V8M1 4.5H8" stroke="#9a9a9a" stroke-width="2"/></svg>
<div class="a" style="left:1334px;top:49px;width:11px;height:14px;background:#434343;border-radius:3px 0 0 3px"></div>
<svg class="a" style="left:1335px;top:51.5px" width="9" height="9" viewBox="0 0 9 9"><path d="M4.5 1V8M1 4.5H8" stroke="#9a9a9a" stroke-width="2"/></svg>
<div class="a" style="left:0px;top:286px;width:1142px;height:26px;background:#727272"></div>
<div class="a" style="left:0px;top:286px;width:1142px;height:1px;background:#7e7e7e"></div>
<div class="a" style="left:0px;top:312px;width:1345px;height:1px;background:#1c1c1c"></div>
<svg class="a" style="left:0px;top:300px;transform:" width="12" height="12" viewBox="0 0 12 12"><path d="M0 2L10 12M0 5L7 12M0 8L4 12" stroke="#3a3a3a" stroke-width="1" fill="none"/><path d="M0 3L9 12M0 6L6 12M0 9L3 12" stroke="#a0a0a0" stroke-width="1" fill="none"/></svg>
<div class="w menu" style="left:7px;top:289px;width:30px;height:20px;"></div>
<svg class="a" style="left:11px;top:291px" width="16" height="16" viewBox="0 0 16 16"><path d="M1.5 2.2L8 1L14.5 2.2V10.5L8 15L1.5 10.5z" fill="#fafafa" stroke="#1a1a1a" stroke-width="1"/><path d="M8 4.2L14.5 2.2V10.5L8 15z" fill="#707070"/><path d="M1.5 2.2L8 4.2V15L1.5 10.5z" fill="url(#gcy)"/><path d="M1.5 2.2L8 4.2L14.5 2.2M8 4.2V15" stroke="#333" stroke-width=".6" fill="none"/></svg>
<svg class="a" style="left:27.5px;top:292px" width="7" height="14" viewBox="0 0 7 14"><path d="M3.5 0.6L6.3 5.9H0.7z" fill="#c8c8c8"/><path d="M3.5 13.4L6.3 8.1H0.7z" fill="#c8c8c8" opacity=".85"/></svg>
<div class="t" style="left:50.5px;top:294px;">View</div>
<div class="t" style="left:94px;top:294px;">Select</div>
<div class="t" style="left:145px;top:294px;">Add</div>
<div class="t" style="left:184px;top:294px;">Object</div>
<div class="w menu" style="left:230px;top:289px;width:113px;height:20px;"></div>
<svg class="a" style="left:234px;top:291px" width="16" height="16" viewBox="0 0 16 16"><path d="M8 1.2L14.5 4V11.5L8 15L1.5 11.5V4z" fill="#f4a84a" stroke="#5a340a" stroke-width="1"/><path d="M8 7L14.5 4V11.5L8 15z" fill="#cf7a1c"/><path d="M1.5 4L8 7L14.5 4L8 1.2z" fill="#ffe2ac"/><path d="M1.5 4L8 7L14.5 4M8 7V15" stroke="#5a340a" stroke-width=".8" fill="none"/></svg>
<div class="t" style="left:254.5px;top:294px;color:#fff">Object Mode</div>
<svg class="a" style="left:332px;top:292px" width="7" height="14" viewBox="0 0 7 14"><path d="M3.5 0.6L6.3 5.9H0.7z" fill="#c8c8c8"/><path d="M3.5 13.4L6.3 8.1H0.7z" fill="#c8c8c8" opacity=".85"/></svg>
<div class="w menu" style="left:348px;top:289px;width:35px;height:20px;"></div>
<svg class="a" style="left:352px;top:291.5px" width="15" height="15" viewBox="0 0 15 15"><defs><radialGradient id="gsh" cx=".35" cy=".3" r=".75"><stop offset="0" stop-color="#f4e4e0"/><stop offset=".5" stop-color="#c87870"/><stop offset="1" stop-color="#6a2a24"/></radialGradient></defs><circle cx="7.5" cy="7.5" r="6.6" fill="url(#gsh)" stroke="#e0e0e0" stroke-width=".8"/></svg>
<svg class="a" style="left:372px;top:292px" width="7" height="14" viewBox="0 0 7 14"><path d="M3.5 0.6L6.3 5.9H0.7z" fill="#c8c8c8"/><path d="M3.5 13.4L6.3 8.1H0.7z" fill="#c8c8c8" opacity=".85"/></svg>
<div class="w tool" style="left:388px;top:289px;width:55px;height:20px;"></div>
<div class="w menu" style="left:388px;top:289px;width:35px;height:20px;border-radius:4px 0 0 4px"></div>
<svg class="a" style="left:391px;top:291px" width="16" height="16" viewBox="0 0 16 16"><circle cx="5" cy="5" r="3.9" fill="url(#gsp)" stroke="#333" stroke-width=".6"/><circle cx="10" cy="10.5" r="4.4" fill="url(#gsp)" stroke="#333" stroke-width=".6"/><rect x="5.5" y="6" width="3" height="3" fill="#fff" stroke="#2a62c8" stroke-width="1"/></svg>
<svg class="a" style="left:412px;top:292px" width="7" height="14" viewBox="0 0 7 14"><path d="M3.5 0.6L6.3 5.9H0.7z" fill="#c8c8c8"/><path d="M3.5 13.4L6.3 8.1H0.7z" fill="#c8c8c8" opacity=".85"/></svg>
<svg class="a" style="left:424px;top:291px" width="18" height="16" viewBox="0 0 18 16"><circle cx="4" cy="3" r="1.3" fill="none" stroke="#2850a0" stroke-width=".9"/><circle cx="9" cy="3" r="1.3" fill="none" stroke="#2850a0" stroke-width=".9"/><circle cx="14" cy="3" r="1.3" fill="none" stroke="#2850a0" stroke-width=".9"/><path d="M1 10.5L5 7V9.3H13V7L17 10.5L13 14V11.7H5V14z" fill="#fff" stroke="#222" stroke-width=".8"/></svg>
<div class="w menu" style="left:448px;top:289px;width:152px;height:20px;"></div>
<div class="w" style="left:448px;top:289px;width:20px;height:20px;border-radius:4px 0 0 4px;background:linear-gradient(#7c7c7c,#6a6a6a)"></div>
<div class="w" style="left:467px;top:289px;width:21px;height:20px;border-radius:0;background:linear-gradient(#5a8ad0,#4a78c0)"></div>
<div class="a" style="left:507px;top:290px;width:1px;height:18px;background:#2a2a2a"></div>
<div class="a" style="left:527px;top:290px;width:1px;height:18px;background:#2a2a2a"></div>
<svg class="a" style="left:449px;top:290px" width="18" height="18" viewBox="0 0 18 18"><path d="M8.5 10V2" stroke="#3a6ae0" stroke-width="2.2"/><path d="M8.5 10L2 15" stroke="#e03a30" stroke-width="2.2"/><path d="M8.5 10L16 14.5" stroke="#40c040" stroke-width="2.2"/><circle cx="8.5" cy="2.2" r="1.4" fill="#d8e4ff"/></svg>
<svg class="a" style="left:469px;top:291px" width="17" height="16" viewBox="0 0 17 16"><path d="M2.2 14.8L1.2 13.8L9 6L6.8 3.8L14.8 1.2L12.2 9.2L10 7z" fill="#a4c4f6" stroke="#17367c" stroke-width=".9" stroke-linejoin="round"/></svg>
<svg class="a" style="left:489px;top:291px" width="17" height="16" viewBox="0 0 17 16"><path d="M2.5 14.5C2.5 8 7 3.5 14.5 3" stroke="#2a3e60" stroke-width="3.4" fill="none"/><path d="M2.5 14.5C2.5 8 7 3.5 14.5 3" stroke="#5c80b4" stroke-width="2" fill="none"/></svg>
<svg class="a" style="left:509px;top:291px" width="17" height="16" viewBox="0 0 17 16"><path d="M2.5 14L9 7.5" stroke="#2a3e60" stroke-width="3.2"/><path d="M2.5 14L9 7.5" stroke="#5c80b4" stroke-width="1.8"/><rect x="8.5" y="2" width="6.5" height="6" fill="#587cb2" stroke="#2a3e60" stroke-width=".9"/></svg>
<div class="t" style="left:535px;top:294px;color:#fff">Global</div>
<svg class="a" style="left:589px;top:292px" width="7" height="14" viewBox="0 0 7 14"><path d="M3.5 0.6L6.3 5.9H0.7z" fill="#c8c8c8"/><path d="M3.5 13.4L6.3 8.1H0.7z" fill="#c8c8c8" opacity=".85"/></svg>
<div class="w" style="left:605px;top:289px;width:50px;height:20px;background:#838383;border-radius:4px"></div>
<div class="a" style="left:615px;top:290px;width:1px;height:18px;background:#3a3a3a"></div>
<div class="a" style="left:625px;top:290px;width:1px;height:18px;background:#3a3a3a"></div>
<div class="a" style="left:634px;top:290px;width:1px;height:18px;background:#3a3a3a"></div>
<div class="a" style="left:644px;top:290px;width:1px;height:18px;background:#3a3a3a"></div>
<div class="a" style="left:606px;top:299px;width:48px;height:1px;background:#3a3a3a"></div>
<div class="w" style="left:660px;top:289px;width:50px;height:20px;background:#838383;border-radius:4px"></div>
<div class="a" style="left:670px;top:290px;width:1px;height:18px;background:#3a3a3a"></div>
<div class="a" style="left:680px;top:290px;width:1px;height:18px;background:#3a3a3a"></div>
<div class="a" style="left:689px;top:290px;width:1px;height:18px;background:#3a3a3a"></div>
<div class="a" style="left:699px;top:290px;width:1px;height:18px;background:#3a3a3a"></div>
<div class="a" style="left:661px;top:299px;width:48px;height:1px;background:#3a3a3a"></div>
<div class="a" style="left:607.5px;top:291.5px;width:4px;height:4px;background:#f0a040;border-radius:50%;border:.5px solid #6a3a00"></div>
<div class="w" style="left:715px;top:289px;width:21px;height:20px;background:linear-gradient(#4e4e4e,#5c5c5c)"></div>
<svg class="a" style="left:717px;top:291px" width="17" height="16" viewBox="0 0 17 16"><rect x="1.5" y="2" width="10.5" height="10.5" fill="url(#gpl)" stroke="#ddd" stroke-width="1"/><path d="M3 11H8" stroke="#444" stroke-width=".8"/><path d="M11.3 6.8a1.9 1.9 0 0 1 3.8 0v1.4a1.9 1.9 0 0 1-3.8 0zM11.3 10.8a1.9 1.9 0 0 1 3.8 0v1.4a1.9 1.9 0 0 1-3.8 0z" fill="none" stroke="#222" stroke-width="2.2"/><path d="M11.3 6.8a1.9 1.9 0 0 1 3.8 0v1.4a1.9 1.9 0 0 1-3.8 0zM11.3 10.8a1.9 1.9 0 0 1 3.8 0v1.4a1.9 1.9 0 0 1-3.8 0z" fill="none" stroke="#f4f4f4" stroke-width="1.1"/></svg>
<div class="w" style="left:740px;top:289px;width:20px;height:20px;background:linear-gradient(#8e8e8e,#7a7a7a)"></div>
<svg class="a" style="left:742px;top:291px" width="16" height="16" viewBox="0 0 16 16"><circle cx="8" cy="8" r="6" fill="none" stroke="#a4a4a4" stroke-width="1.6"/><circle cx="8" cy="8" r="2.6" fill="#9c9c9c" stroke="#b0b0b0" stroke-width=".8"/></svg>
<div class="w menu" style="left:765px;top:289px;width:55px;height:20px;"></div>
<div class="w" style="left:765px;top:289px;width:20px;height:20px;border-radius:4px 0 0 4px;background:linear-gradient(#8e8e8e,#7a7a7a)"></div>
<svg class="a" style="left:767px;top:291px" width="16" height="16" viewBox="0 0 16 16"><path d="M2.5 8L7.5 3.5a3.8 3.8 0 0 1 5.5 5.5L8.5 13.5" fill="none" stroke="#565656" stroke-width="4.4"/><path d="M2.5 8L7.5 3.5a3.8 3.8 0 0 1 5.5 5.5L8.5 13.5" fill="none" stroke="#a2a2a2" stroke-width="2.6"/></svg>
<svg class="a" style="left:787px;top:291px" width="17" height="16" viewBox="0 0 17 16"><path d="M7.5 2V15M12.5 2V15M3 7.5H16M3 12.5H16" stroke="#fff" stroke-width="1" shape-rendering="crispEdges"/><circle cx="5.8" cy="5" r="3.2" fill="#2f6fe0" stroke="#fff" stroke-width="1.2"/><circle cx="5.8" cy="5" r="1" fill="#fff"/></svg>
<svg class="a" style="left:808px;top:292px" width="7" height="14" viewBox="0 0 7 14"><path d="M3.5 0.6L6.3 5.9H0.7z" fill="#c8c8c8"/><path d="M3.5 13.4L6.3 8.1H0.7z" fill="#c8c8c8" opacity=".85"/></svg>
<div class="w tool" style="left:825px;top:289px;width:40px;height:20px;"></div>
<div class="a" style="left:844px;top:290px;width:1px;height:18px;background:#2a2a2a"></div>
<svg class="a" style="left:827px;top:291px" width="17" height="16" viewBox="0 0 17 16"><rect x="1" y="5" width="13" height="9.5" rx="1" fill="#6a6a6a" stroke="#1a1a1a" stroke-width="1"/><rect x="1.5" y="5.5" width="12" height="2.2" fill="#c8c8c8"/><rect x="3" y="3" width="4" height="2.5" fill="#888" stroke="#222" stroke-width=".7"/><circle cx="2.8" cy="6.6" r=".8" fill="#e02020"/><circle cx="8" cy="10" r="3.3" fill="#3a3a3a" stroke="#ddd" stroke-width=".9"/><circle cx="8" cy="10" r="1.6" fill="#c03030"/><circle cx="13.2" cy="3.6" r="2.6" fill="#fff6c0" stroke="#f0c830" stroke-width="1.2"/></svg>
<svg class="a" style="left:846px;top:291px" width="17" height="16" viewBox="0 0 17 16"><rect x="2" y="7" width="13" height="8" fill="#3a3a3a" stroke="#111" stroke-width="1"/><path d="M2 7L14.5 2.2L15.5 4.8L3 9.5z" fill="#eee" stroke="#111" stroke-width=".9"/><path d="M5 6L6.5 8M8.5 4.6L10 6.6M12 3.3L13.5 5.3" stroke="#111" stroke-width="1.3"/><rect x="4" y="9.5" width="9" height="3.5" fill="#aaa"/><path d="M1 4.5L4 9H1z" fill="#4a80e0"/></svg>
<div class="w tool" style="left:871px;top:289px;width:19px;height:20px;"></div>
<svg class="a" style="left:874px;top:292px" width="13" height="14" viewBox="0 0 13 14"><rect x="1.5" y="1" width="3.6" height="12" rx=".8" fill="#fff" stroke="#111" stroke-width="1"/><rect x="7.8" y="1" width="3.6" height="12" rx=".8" fill="#fff" stroke="#111" stroke-width="1"/></svg>
<div class="w tool" style="left:896px;top:289px;width:101px;height:20px;"></div>
<svg class="a" style="left:899px;top:290px" width="18" height="18" viewBox="0 0 18 18"><path d="M3 5L15 7L13.5 16L1.5 14z" fill="#eee" stroke="#222" stroke-width=".9"/><rect x="3" y="1.5" width="11" height="11" fill="#f4f4f4" stroke="#222" stroke-width=".9"/><rect x="5" y="3.5" width="7" height="7" fill="#e8e0b0"/><rect x="7.5" y="4" width="3" height="5" rx="1" fill="#4a7ad0"/><circle cx="6.8" cy="8.3" r="1.5" fill="#ddd" stroke="#333" stroke-width=".5"/></svg>
<div class="t" style="left:922.5px;top:294px;">RenderLayer</div>
<div class="a" style="left:1143px;top:286px;width:202px;height:26px;background:#676767"></div>
<div class="a" style="left:1143px;top:286px;width:202px;height:1px;background:#747474"></div>
<svg class="a" style="left:1144px;top:300px;transform:" width="12" height="12" viewBox="0 0 12 12"><path d="M0 2L10 12M0 5L7 12M0 8L4 12" stroke="#3a3a3a" stroke-width="1" fill="none"/><path d="M0 3L9 12M0 6L6 12M0 9L3 12" stroke="#a0a0a0" stroke-width="1" fill="none"/></svg>
<div class="w menu" style="left:1151px;top:290px;width:30px;height:20px;"></div>
<svg class="a" style="left:1155px;top:293px" width="15" height="14" viewBox="0 0 15 14"><rect x=".5" y=".5" width="14" height="13" fill="#fff" stroke="#222" stroke-width=".8"/><rect x="1" y="1" width="13" height="5.5" fill="#e0a098"/><circle cx="9.5" cy="3.5" r="1.4" fill="#fff4d0"/><path d="M1 6L4 4.8L6 6L9 5.2L14 6V7H1z" fill="#3a2a30"/><rect x="1" y="7" width="13" height="3" fill="#7a80c0"/><rect x="2" y="11.2" width="1.4" height="1.2" fill="#d02020"/><path d="M4.5 11.8H13" stroke="#888" stroke-width=".8"/></svg>
<svg class="a" style="left:1172px;top:293px" width="7" height="14" viewBox="0 0 7 14"><path d="M3.5 0.6L6.3 5.9H0.7z" fill="#c8c8c8"/><path d="M3.5 13.4L6.3 8.1H0.7z" fill="#c8c8c8" opacity=".85"/></svg>
<div class="t" style="left:1194px;top:295px;">View</div>
<div class="t" style="left:1238px;top:295px;">Image</div>
<div class="w txt" style="left:1282px;top:290px;width:80px;height:20px;"></div>
<div class="w menu" style="left:1282px;top:290px;width:32px;height:20px;border-radius:4px 0 0 4px"></div>
<svg class="a" style="left:1286px;top:292px" width="15" height="16" viewBox="0 0 15 16"><path d="M4 .5H14.5V15.5H.5V4z" fill="#fff" stroke="#222" stroke-width=".8"/><path d="M4 .5V4H.5z" fill="#ccc" stroke="#222" stroke-width=".6"/><rect x="1.5" y="5" width="12" height="4.5" fill="#e0a098"/><path d="M5 1.5H13.5V5H1.5z" fill="#e0a098"/><circle cx="10" cy="4.5" r="1.4" fill="#fff4d0"/><path d="M1.5 9L5 7.8L8 9L13.5 8.5V10H1.5z" fill="#3a2a30"/><rect x="1.5" y="10" width="12" height="4.5" fill="#7a80c0"/></svg>
<svg class="a" style="left:1304px;top:293px" width="7" height="14" viewBox="0 0 7 14"><path d="M3.5 0.6L6.3 5.9H0.7z" fill="#c8c8c8"/><path d="M3.5 13.4L6.3 8.1H0.7z" fill="#c8c8c8" opacity=".85"/></svg>
<div class="t" style="left:1321.5px;top:295px;">1.jpg</div>
<div class="a" style="left:0px;top:313px;width:1168px;height:351px;background:#393939"></div>
<div class="a" style="left:0px;top:313px;width:1167px;height:1px;background:#454545"></div>
<svg class="a" style="left:0;top:313px" width="1152" height="333" viewBox="0 313 1152 333"><path d="M7.96 313V646M21.22 313V646M34.48 313V646M47.74 313V646M74.26 313V646M87.52 313V646M100.78 313V646M114.04 313V646M140.56 313V646M153.82 313V646M167.08 313V646M180.34 313V646M206.86 313V646M220.12 313V646M233.38 313V646M246.64 313V646M273.16 313V646M286.42 313V646M299.68 313V646M312.94 313V646M339.46 313V646M352.72 313V646M365.98 313V646M379.24 313V646M405.76 313V646M419.02 313V646M432.28 313V646M445.54 313V646M472.06 313V646M485.32 313V646M498.58 313V646M511.84 313V646M538.36 313V646M551.62 313V646M564.88 313V646M578.14 313V646M604.66 313V646M617.92 313V646M631.18 313V646M644.44 313V646M670.96 313V646M684.22 313V646M697.48 313V646M710.74 313V646M737.26 313V646M750.52 313V646M763.78 313V646M777.04 313V646M803.56 313V646M816.82 313V646M830.08 313V646M843.34 313V646M869.86 313V646M883.12 313V646M896.38 313V646M909.64 313V646M936.16 313V646M949.42 313V646M962.68 313V646M975.94 313V646M1002.46 313V646M1015.72 313V646M1028.98 313V646M1042.24 313V646M1068.76 313V646M1082.02 313V646M1095.28 313V646M1108.54 313V646M1135.06 313V646M1148.32 313V646M0 596.64H1152M0 583.38H1152M0 570.12H1152M0 556.86H1152M0 530.34H1152M0 517.08H1152M0 503.82H1152M0 490.56H1152M0 464.04H1152M0 450.78H1152M0 437.52H1152M0 424.26H1152M0 397.74H1152M0 384.48H1152M0 371.22H1152M0 357.96H1152M0 331.44H1152M0 318.18H1152M0 623.16H1152M0 636.42H1152" stroke="#2f2f2f" stroke-width="1" fill="none" shape-rendering="crispEdges"/><path d="M61.00 313V646M127.30 313V646M193.60 313V646M259.90 313V646M326.20 313V646M392.50 313V646M458.80 313V646M525.10 313V646M591.40 313V646M657.70 313V646M724.00 313V646M790.30 313V646M856.60 313V646M922.90 313V646M989.20 313V646M1055.50 313V646M1121.80 313V646M0 609.90H1152M0 543.60H1152M0 477.30H1152M0 411.00H1152M0 344.70H1152" stroke="#282828" stroke-width="1" fill="none" shape-rendering="crispEdges"/></svg>
<div class="a" style="left:0px;top:335px;width:11px;height:14px;background:#454545;border-radius:0 3px 3px 0"></div>
<svg class="a" style="left:0px;top:338px" width="9" height="9" viewBox="0 0 9 9"><path d="M4.5 1V8M1 4.5H8" stroke="#9a9a9a" stroke-width="2"/></svg>
<div class="node" style="left:38px;top:380px;width:93.5px;height:137.5px;border:1px solid #dc9038;"><div class="nh"></div></div>
<svg class="a" style="left:41.5px;top:384px" width="7" height="7" viewBox="0 0 7 7"><path d="M0.2 0.3H6.8L3.5 6.6z" fill="#e05f10"/></svg>
<div class="nt" style="left:53px;top:383px">Texture Coordinate</div>
<div class="nt" style="right:1229.5px;top:400px;color:#000">Generated</div>
<div class="nt" style="right:1229.5px;top:414px;color:#000">Normal</div>
<div class="nt" style="right:1229.5px;top:429px;color:#000">UV</div>
<div class="nt" style="right:1229.5px;top:443px;color:#000">Object</div>
<div class="nt" style="right:1229.5px;top:458px;color:#000">Camera</div>
<div class="nt" style="right:1229.5px;top:473px;color:#000">Window</div>
<div class="nt" style="right:1229.5px;top:487px;color:#000">Reflection</div>
<div class="a" style="left:47px;top:504px;width:9px;height:9px;border-radius:50%;background:linear-gradient(#585858,#3e3e3e);border:1px solid #222"></div>
<div class="nt" style="left:61.5px;top:505px;color:#000">From Dupli</div>
<div class="node" style="left:193px;top:363px;width:121.5px;height:151px;"><div class="nh"></div></div>
<svg class="a" style="left:196.5px;top:367px" width="7" height="7" viewBox="0 0 7 7"><path d="M0.2 0.3H6.8L3.5 6.6z" fill="#3e3e3e"/></svg>
<div class="nt" style="left:208px;top:366px">Image Texture</div>
<div class="nt" style="right:1046.5px;top:383px;color:#000">Color</div>
<div class="nt" style="right:1046.5px;top:397px;color:#000">Alpha</div>
<div class="nm" style="left:199.5px;top:413px;width:107.5px;height:12px;background:linear-gradient(#999,#b3b3b3)"></div>
<div class="nm" style="left:199.5px;top:413px;width:21px;height:12px;border-radius:3.5px 0 0 3.5px"></div>
<svg class="a" style="left:203px;top:415px" width="8" height="8" viewBox="0 0 8 8"><rect x=".3" y=".3" width="7.4" height="7.4" fill="#fff" stroke="#222" stroke-width=".5"/><rect x=".8" y=".8" width="6.4" height="3" fill="#e0a098"/><rect x=".8" y="4.2" width="6.4" height="3" fill="#7a80c0"/><path d="M.8 3.6H7.2V4.4H.8z" fill="#3a2a30"/></svg>
<svg class="a" style="left:214px;top:415px" width="4" height="8" viewBox="0 0 4 8"><path d="M2 0L4 3.2H0zM2 8L4 4.8H0z" fill="#c8c8c8"/></svg>
<div class="nt" style="left:226px;top:415px;color:#000">1.jpg</div>
<div class="a" style="left:266px;top:414px;width:14.5px;height:10px;background:linear-gradient(#a9a9a9,#8a8a8a);border-left:1px solid #1e1e1e"></div>
<div class="nt" style="left:271px;top:415px;color:#000">F</div>
<div class="a" style="left:280.5px;top:414px;width:13px;height:10px;background:linear-gradient(#a9a9a9,#8a8a8a);border-left:1px solid #1e1e1e"></div>
<div class="a" style="left:293.5px;top:414px;width:12.5px;height:10px;background:linear-gradient(#a9a9a9,#8a8a8a);border-left:1px solid #1e1e1e;border-radius:0 3px 3px 0"></div>
<svg class="a" style="left:282.5px;top:414.5px" width="10" height="9" viewBox="0 0 10 9"><path d="M.5 2.5H3.5L4.5 1.2H9V8H.5z" fill="#e8d8a0" stroke="#333" stroke-width=".6"/><path d="M.5 8L2 4H9.8L9 8z" fill="#f0e4b8" stroke="#333" stroke-width=".5"/></svg>
<svg class="a" style="left:295.5px;top:414.5px" width="9" height="9" viewBox="0 0 9 9"><path d="M1.5 1.5L7.5 7.5M7.5 1.5L1.5 7.5" stroke="#111" stroke-width="2.6"/><path d="M1.5 1.5L7.5 7.5M7.5 1.5L1.5 7.5" stroke="#fff" stroke-width="1.3"/></svg>
<div class="nm" style="left:199.5px;top:429.5px;width:107.5px;height:12.5px"><span style="position:absolute;left:5px;top:0.5px">Color</span><svg style="position:absolute;right:2.5px;top:1.5px" width="4" height="8" viewBox="0 0 4 8"><path d="M2 0L4 3.2H0zM2 8L4 4.8H0z" fill="#c8c8c8"/></svg></div>
<div class="nm" style="left:199.5px;top:445.5px;width:107.5px;height:12.5px"><span style="position:absolute;left:5px;top:0.5px">Flat</span><svg style="position:absolute;right:2.5px;top:1.5px" width="4" height="8" viewBox="0 0 4 8"><path d="M2 0L4 3.2H0zM2 8L4 4.8H0z" fill="#c8c8c8"/></svg></div>
<div class="nm" style="left:199.5px;top:462px;width:107.5px;height:12.5px"><span style="position:absolute;left:5px;top:0.5px">Linear</span><svg style="position:absolute;right:2.5px;top:1.5px" width="4" height="8" viewBox="0 0 4 8"><path d="M2 0L4 3.2H0zM2 8L4 4.8H0z" fill="#c8c8c8"/></svg></div>
<div class="nm" style="left:199.5px;top:478.5px;width:107.5px;height:12.5px"><span style="position:absolute;left:5px;top:0.5px">Single Image</span><svg style="position:absolute;right:2.5px;top:1.5px" width="4" height="8" viewBox="0 0 4 8"><path d="M2 0L4 3.2H0zM2 8L4 4.8H0z" fill="#c8c8c8"/></svg></div>
<div class="nt" style="left:205px;top:501px;color:#000">Vector</div>
<div class="node" style="left:365px;top:362.5px;width:159.5px;height:138px;"><div class="nh"></div></div>
<svg class="a" style="left:368.5px;top:366.5px" width="7" height="7" viewBox="0 0 7 7"><path d="M0.2 0.3H6.8L3.5 6.6z" fill="#3e3e3e"/></svg>
<div class="nt" style="left:380px;top:365.5px">ColorRamp</div>
<div class="nt" style="right:837px;top:382px;color:#000">Color</div>
<div class="nt" style="right:837px;top:397px;color:#000">Alpha</div>
<svg class="a" style="left:374px;top:416px" width="50" height="11" viewBox="0 0 50 11"><path d="M5 2V9M1.5 5.5H8.5" stroke="#222" stroke-width="2.4"/><path d="M5 2.5V8.5M2 5.5H8" stroke="#fff" stroke-width="1.2"/><path d="M19 5.5H26" stroke="#222" stroke-width="2.4"/><path d="M19.5 5.5H25.5" stroke="#fff" stroke-width="1.2"/><path d="M37.5 5.5H47M40 3L37.5 5.5L40 8M44.5 3L47 5.5L44.5 8" stroke="#222" stroke-width="2.2" fill="none"/><path d="M37.5 5.5H47M40 3L37.5 5.5L40 8M44.5 3L47 5.5L44.5 8" stroke="#fff" stroke-width="1" fill="none"/></svg>
<div class="nm" style="left:432px;top:415px;width:85px;height:12.5px"><span style="position:absolute;left:5px;top:0.5px">Linear</span><svg style="position:absolute;right:2.5px;top:1.5px" width="4" height="8" viewBox="0 0 4 8"><path d="M2 0L4 3.2H0zM2 8L4 4.8H0z" fill="#c8c8c8"/></svg></div>
<div class="a" style="left:371.5px;top:430.5px;width:146px;height:14.5px;background:linear-gradient(90deg,#1c1c1c,#5c5c5c 10%,#8b8b8b 25%,#bdbdbd 50%,#e2e2e2 75%,#fff);border:1px solid #0a0a0a"></div>
<svg class="a" style="left:366px;top:430px" width="158" height="19" viewBox="0 0 158 19"><path d="M6.5 1V9" stroke="#fff" stroke-width="1" stroke-dasharray="1.6 1.4"/><path d="M3 11L6.3 8L9.6 11V17.2H3z" fill="#e8e8e8" stroke="#000" stroke-width=".9"/><rect x="4.2" y="12" width="4.2" height="4.2" fill="#000"/><path d="M151.2 1V9" stroke="#000" stroke-width="1"/><path d="M147.9 11L151.2 8L154.5 11V17.2H147.9z" fill="#9a9a9a" stroke="#000" stroke-width=".9"/><rect x="149.1" y="12" width="4.2" height="4.2" fill="#fff"/></svg>
<div class="a" style="left:371.5px;top:451px;width:41px;height:13px;border:1px solid #1e1e1e;border-radius:6px;background:linear-gradient(#a0a0a0,#b6b6b6)"></div>
<svg class="a" style="left:375.5px;top:454.5px" width="3" height="5" viewBox="0 0 3 5"><path d="M3 0V5L0 2.5z" fill="#666"/></svg>
<svg class="a" style="left:405.5px;top:454.5px" width="3" height="5" viewBox="0 0 3 5"><path d="M0 0V5L3 2.5z" fill="#666"/></svg>
<div class="nt" style="right:944px;top:454px;color:#000">0</div>
<div class="a" style="left:419.5px;top:451px;width:97.5px;height:13px;border:1px solid #1e1e1e;border-radius:6px;background:linear-gradient(#a0a0a0,#b6b6b6)"></div>
<svg class="a" style="left:423.5px;top:454.5px" width="3" height="5" viewBox="0 0 3 5"><path d="M3 0V5L0 2.5z" fill="#666"/></svg>
<svg class="a" style="left:510.0px;top:454.5px" width="3" height="5" viewBox="0 0 3 5"><path d="M0 0V5L3 2.5z" fill="#666"/></svg>
<div class="nt" style="left:428.5px;top:454px;color:#000">Pos:</div>
<div class="nt" style="right:840.5px;top:454px;color:#000">0.000</div>
<div class="a" style="left:371.5px;top:468.5px;width:145.5px;height:12.5px;border-radius:3.5px;background:#000;border:1px solid #1a1a1a"></div>
<div class="nt" style="left:376.5px;top:487px;color:#000">Fac</div>
<div class="node" style="left:580px;top:432px;width:99px;height:76px;"><div class="nh"></div></div>
<svg class="a" style="left:583.5px;top:436px" width="7" height="7" viewBox="0 0 7 7"><path d="M0.2 0.3H6.8L3.5 6.6z" fill="#3e3e3e"/></svg>
<div class="nt" style="left:595px;top:435px">Diffuse BSDF</div>
<div class="nt" style="right:680.5px;top:452px;color:#000">BSDF</div>
<div class="a" style="left:587px;top:464px;width:17px;height:11.5px;border-radius:3.5px;background:#e80e02;border:1px solid #222"></div>
<div class="nt" style="left:616px;top:466px;color:#000">Color</div>
<div class="a" style="left:586px;top:478.5px;width:85.5px;height:12px;border:1px solid #1e1e1e;border-radius:6px;background:linear-gradient(#a0a0a0,#b6b6b6)"></div>
<div class="nt" style="left:595px;top:480px;color:#000">Roughness:0.000</div>
<div class="nt" style="left:592px;top:495px;color:#000">Normal</div>
<div class="node" style="left:584.5px;top:520.5px;width:93px;height:47px;"><div class="nh"></div></div>
<svg class="a" style="left:588.0px;top:524.5px" width="7" height="7" viewBox="0 0 7 7"><path d="M0.2 0.3H6.8L3.5 6.6z" fill="#3e3e3e"/></svg>
<div class="nt" style="left:599.5px;top:523.5px">Transparent BSDF</div>
<div class="nt" style="right:682px;top:540px;color:#000">BSDF</div>
<div class="a" style="left:591.5px;top:551.5px;width:19px;height:12.5px;border-radius:3.5px;background:#fff;border:1px solid #222"></div>
<div class="nt" style="left:621px;top:553px;color:#000">Color</div>
<div class="node" style="left:790px;top:403px;width:93.5px;height:75.5px;"><div class="nh"></div></div>
<svg class="a" style="left:793.5px;top:407px" width="7" height="7" viewBox="0 0 7 7"><path d="M0.2 0.3H6.8L3.5 6.6z" fill="#3e3e3e"/></svg>
<div class="nt" style="left:805px;top:406px">Mix Shader</div>
<div class="nt" style="right:479px;top:422px;color:#000">Shader</div>
<div class="nt" style="left:801.5px;top:435px;color:#000">Fac</div>
<div class="nt" style="left:801.5px;top:450px;color:#000">Shader</div>
<div class="nt" style="left:801.5px;top:464px;color:#000">Shader</div>
<div class="node" style="left:969px;top:400px;width:93.5px;height:60.5px;"><div class="nh"></div></div>
<svg class="a" style="left:972.5px;top:404px" width="7" height="7" viewBox="0 0 7 7"><path d="M0.2 0.3H6.8L3.5 6.6z" fill="#3e3e3e"/></svg>
<div class="nt" style="left:984px;top:403px">Material Output</div>
<div class="nt" style="left:980.5px;top:417px;color:#000">Surface</div>
<div class="nt" style="left:980.5px;top:431px;color:#000">Volume</div>
<div class="nt" style="left:980.5px;top:446px;color:#000">Displacement</div>
<svg class="a" style="left:0;top:313px" width="1152" height="333" viewBox="0 313 1152 333"><path d="M130.6 432.7C161.8 432.7 161.8 504.4 193 504.4" stroke="#1a1a1a" stroke-width="3.6" fill="none"/><path d="M130.6 432.7C161.8 432.7 161.8 504.4 193 504.4" stroke="#e6e6e6" stroke-width="1.7" fill="none"/><path d="M314 386.4C339.35 386.4 339.35 490.7 364.7 490.7" stroke="#1a1a1a" stroke-width="3.6" fill="none"/><path d="M314 386.4C339.35 386.4 339.35 490.7 364.7 490.7" stroke="#868686" stroke-width="1.7" fill="none"/><path d="M524 386.1C657.0 386.1 657.0 439.2 790 439.2" stroke="#1a1a1a" stroke-width="3.6" fill="none"/><path d="M524 386.1C657.0 386.1 657.0 439.2 790 439.2" stroke="#868686" stroke-width="1.7" fill="none"/><path d="M679 456.1C734.5 456.1 734.5 453.6 790 453.6" stroke="#1a1a1a" stroke-width="3.6" fill="none"/><path d="M679 456.1C734.5 456.1 734.5 453.6 790 453.6" stroke="#868686" stroke-width="1.7" fill="none"/><path d="M677.4 543.6C733.7 543.6 733.7 468.2 790 468.2" stroke="#1a1a1a" stroke-width="3.6" fill="none"/><path d="M677.4 543.6C733.7 543.6 733.7 468.2 790 468.2" stroke="#868686" stroke-width="1.7" fill="none"/><path d="M883.2 425.6C926.1 425.6 926.1 420.5 969 420.5" stroke="#1a1a1a" stroke-width="3.6" fill="none"/><path d="M883.2 425.6C926.1 425.6 926.1 420.5 969 420.5" stroke="#868686" stroke-width="1.7" fill="none"/></svg>
<div class="sk" style="left:127.1px;top:400.0px;background:#6363c7"></div>
<div class="sk" style="left:127.1px;top:414.58px;background:#6363c7"></div>
<div class="sk" style="left:127.1px;top:429.16px;background:#6363c7"></div>
<div class="sk" style="left:127.1px;top:443.74px;background:#6363c7"></div>
<div class="sk" style="left:127.1px;top:458.32px;background:#6363c7"></div>
<div class="sk" style="left:127.1px;top:472.9px;background:#6363c7"></div>
<div class="sk" style="left:127.1px;top:487.48px;background:#6363c7"></div>
<div class="sk" style="left:310.5px;top:382.9px;background:#c7c729"></div>
<div class="sk" style="left:310.5px;top:397.5px;background:#a1a1a1"></div>
<div class="sk" style="left:189.5px;top:500.9px;background:#6363c7"></div>
<div class="sk" style="left:520.5px;top:382.6px;background:#c7c729"></div>
<div class="sk" style="left:520.5px;top:397.5px;background:#a1a1a1"></div>
<div class="sk" style="left:361.2px;top:487.2px;background:#a1a1a1"></div>
<div class="sk" style="left:675.5px;top:452.6px;background:#63c763"></div>
<div class="sk" style="left:576.0px;top:466.0px;background:#c7c729"></div>
<div class="sk" style="left:576.0px;top:480.4px;background:#a1a1a1"></div>
<div class="sk" style="left:576.0px;top:495.1px;background:#6363c7"></div>
<div class="sk" style="left:673.9px;top:540.1px;background:#63c763"></div>
<div class="sk" style="left:580.9px;top:553.6px;background:#c7c729"></div>
<div class="sk" style="left:879.7px;top:422.1px;background:#63c763"></div>
<div class="sk" style="left:786.5px;top:435.7px;background:#a1a1a1"></div>
<div class="sk" style="left:786.5px;top:450.1px;background:#63c763"></div>
<div class="sk" style="left:786.5px;top:464.7px;background:#63c763"></div>
<div class="sk" style="left:965.5px;top:417.0px;background:#63c763"></div>
<div class="sk" style="left:965.5px;top:431.7px;background:#63c763"></div>
<div class="sk" style="left:965.5px;top:446.7px;background:#a1a1a1"></div>
<div class="t" style="left:28px;top:623px;color:#fff">Material</div>
<div class="a" style="left:1152px;top:319px;width:11.5px;height:322px;background:linear-gradient(90deg,#7a7a7a,#8e8e8e 40%,#6c6c6c);border-radius:6px;border:1px solid #3a3a3a"></div>
<div class="a" style="left:2px;top:647px;width:1143px;height:11.5px;background:linear-gradient(#8e8e8e,#868686 40%,#6c6c6c);border-radius:6px;border:1px solid #3a3a3a"></div>
<div class="a" style="left:0px;top:663px;width:1345px;height:1px;background:#6e6e6e"></div>
<div class="a" style="left:1168px;top:313px;width:177px;height:350px;background:#727272"></div>
<div class="a" style="left:1167px;top:313px;width:1px;height:350px;background:#303030"></div>
<svg class="a" style="left:1333px;top:313px;transform:scale(-1,-1)" width="12" height="12" viewBox="0 0 12 12"><path d="M0 2L10 12M0 5L7 12M0 8L4 12" stroke="#3a3a3a" stroke-width="1" fill="none"/><path d="M0 3L9 12M0 6L6 12M0 9L3 12" stroke="#a0a0a0" stroke-width="1" fill="none"/></svg>
<svg class="a" style="left:1181px;top:320px" width="9" height="9" viewBox="0 0 9 9"><path d="M0.3 0.5H8.7L4.5 8.5z" fill="#1a1a1a"/></svg>
<div class="a" style="left:1194px;top:318px;width:14px;height:14px;border-radius:3.5px;border:1px solid #252525;background:linear-gradient(#585858,#3c3c3c)"></div>
<svg class="a" style="left:1194px;top:315px" width="17" height="17" viewBox="0 0 17 17"><path d="M3.6 9.2L7.2 13.4L13.2 4.2" stroke="#fff" stroke-width="2" fill="none"/></svg>
<div class="pt" style="left:1213.5px;top:317.5px;">Grease Pencil</div>
<svg class="a" style="left:1321px;top:316px" width="18" height="18" viewBox="0 0 18 18"><path d="M0.5 0L17.5 17M4.5 0L17.5 13M8.5 0L17.5 9" stroke="#585858" stroke-width="1" fill="none"/><path d="M1.5 0L18.5 17M5.5 0L18.5 13M9.5 0L18.5 9" stroke="#8e8e8e" stroke-width=".9" fill="none"/></svg>
<div class="w tool" style="left:1176px;top:350px;width:164px;height:20px;"></div>
<div class="w menu" style="left:1176px;top:350px;width:32px;height:20px;border-radius:4px 0 0 4px"></div>
<svg class="a" style="left:1179px;top:352px" width="17" height="16" viewBox="0 0 17 16"><path d="M2 14.5L3 10.5L12.5 1.5L15.5 4L6 13.5z" fill="#a8d060" stroke="#333" stroke-width=".8"/><path d="M11 3L12.5 1.5L15.5 4L14 5.5z" fill="#e03030"/><path d="M2 14.5L3 10.5L6 13.5z" fill="#f0d8a0" stroke="#333" stroke-width=".6"/></svg>
<svg class="a" style="left:1198px;top:353px" width="7" height="14" viewBox="0 0 7 14"><path d="M3.5 0.6L6.3 5.9H0.7z" fill="#c8c8c8"/><path d="M3.5 13.4L6.3 8.1H0.7z" fill="#c8c8c8" opacity=".85"/></svg>
<svg class="a" style="left:1212.5px;top:353.5px" width="13" height="13" viewBox="0 0 13 13"><path d="M5.4 1h2.2v4.4H12v2.2H7.6V12H5.4V7.6H1V5.4h4.4z" fill="#fff" stroke="#1a1a1a" stroke-width=".9"/></svg>
<div class="t" style="left:1222px;width:118px;text-align:center;top:355px">New</div>
<div class="w tool" style="left:1176px;top:372.5px;width:164px;height:19.5px;"></div>
<div class="t" style="left:1176px;width:164px;text-align:center;top:377px">New Layer</div>
<div class="w" style="left:1176px;top:395px;width:164px;height:19px;background:#777;border-color:#4e4e4e"></div>
<div class="a" style="left:1257px;top:396px;width:1px;height:17px;background:#4e4e4e"></div>
<div class="t" style="left:1176px;width:81px;text-align:center;top:399px;color:#4e4e4e">Delete Frame</div>
<div class="t" style="left:1257px;width:83px;text-align:center;top:399px;color:#4e4e4e">Convert</div>
<div class="a" style="left:1173px;top:421px;width:172px;height:1px;background:#4c4c4c"></div>
<div class="a" style="left:1173px;top:422px;width:172px;height:1px;background:#858585"></div>
<svg class="a" style="left:1181px;top:429.5px" width="9" height="9" viewBox="0 0 9 9"><path d="M0.3 0.5H8.7L4.5 8.5z" fill="#1a1a1a"/></svg>
<div class="pt" style="left:1193.5px;top:426.5px;">Node</div>
<svg class="a" style="left:1321px;top:425px" width="18" height="18" viewBox="0 0 18 18"><path d="M0.5 0L17.5 17M4.5 0L17.5 13M8.5 0L17.5 9" stroke="#585858" stroke-width="1" fill="none"/><path d="M1.5 0L18.5 17M5.5 0L18.5 13M9.5 0L18.5 9" stroke="#8e8e8e" stroke-width=".9" fill="none"/></svg>
<div class="t" style="left:1184.5px;top:459px;">Name:</div>
<div class="t" style="left:1184.5px;top:484px;">Label:</div>
<div class="w txt" style="left:1235px;top:455px;width:105px;height:19.5px;"></div>
<svg class="a" style="left:1239px;top:457.5px" width="14" height="15" viewBox="0 0 14 15"><rect x=".5" y=".5" width="13" height="14" rx="1.5" fill="#f4f4f4" stroke="#222" stroke-width="1"/><path d="M3 3.5H11" stroke="#333" stroke-width="1"/><rect x="3" y="5.5" width="4" height="4" fill="#555"/><rect x="7" y="8" width="4" height="4" fill="#888"/></svg>
<div class="t" style="left:1259px;top:459px;">Texture Coor...</div>
<div class="w txt" style="left:1235px;top:479.5px;width:105px;height:19.5px;"></div>
<svg class="a" style="left:1239px;top:482px" width="14" height="15" viewBox="0 0 14 15"><rect x=".5" y=".5" width="13" height="14" rx="1.5" fill="#f4f4f4" stroke="#222" stroke-width="1"/><path d="M3 3.5H11" stroke="#333" stroke-width="1"/><rect x="3" y="5.5" width="4" height="4" fill="#555"/><rect x="7" y="8" width="4" height="4" fill="#888"/></svg>
<div class="a" style="left:1173px;top:506px;width:172px;height:1px;background:#4c4c4c"></div>
<div class="a" style="left:1173px;top:507px;width:172px;height:1px;background:#858585"></div>
<svg class="a" style="left:1181px;top:514px" width="9" height="9" viewBox="0 0 9 9"><path d="M0.8 0.3V8.7L8.5 4.5z" fill="#1a1a1a"/></svg>
<div class="a" style="left:1194px;top:512px;width:14px;height:14px;border-radius:3.5px;border:1px solid #252525;background:linear-gradient(#585858,#3c3c3c)"></div>
<div class="pt" style="left:1213.5px;top:511.5px;">Color</div>
<svg class="a" style="left:1321px;top:509px" width="18" height="18" viewBox="0 0 18 18"><path d="M0.5 0L17.5 17M4.5 0L17.5 13M8.5 0L17.5 9" stroke="#585858" stroke-width="1" fill="none"/><path d="M1.5 0L18.5 17M5.5 0L18.5 13M9.5 0L18.5 9" stroke="#8e8e8e" stroke-width=".9" fill="none"/></svg>
<div class="a" style="left:1173px;top:530px;width:172px;height:1px;background:#4c4c4c"></div>
<div class="a" style="left:1173px;top:531px;width:172px;height:1px;background:#858585"></div>
<svg class="a" style="left:1181px;top:538px" width="9" height="9" viewBox="0 0 9 9"><path d="M0.3 0.5H8.7L4.5 8.5z" fill="#1a1a1a"/></svg>
<div class="pt" style="left:1193.5px;top:535.5px;">Properties</div>
<svg class="a" style="left:1321px;top:533px" width="18" height="18" viewBox="0 0 18 18"><path d="M0.5 0L17.5 17M4.5 0L17.5 13M8.5 0L17.5 9" stroke="#585858" stroke-width="1" fill="none"/><path d="M1.5 0L18.5 17M5.5 0L18.5 13M9.5 0L18.5 9" stroke="#8e8e8e" stroke-width=".9" fill="none"/></svg>
<div class="a" style="left:1179px;top:566px;width:14px;height:14px;border-radius:3.5px;border:1px solid #252525;background:linear-gradient(#585858,#3c3c3c)"></div>
<div class="t" style="left:1201.5px;top:567px;">From Dupli</div>
</div></body></html>
